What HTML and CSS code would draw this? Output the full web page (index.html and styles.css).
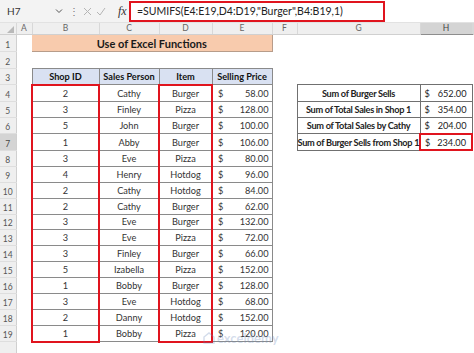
FILE: index.html
```html
<!DOCTYPE html>
<html lang="en">

<head>
    <meta charset="UTF-8">
    <title>Use of Excel Functions</title>
    <link rel="stylesheet" href="styles.css">
</head>

<body>
    <!-- formula bar -->
    <div class="formula-bar">
        <div class="name-box">
            <span>H7</span>
            <svg class="chevron" width="8" height="6" viewBox="0 0 8 6"><path d="M1 1.5 L4 4.5 L7 1.5" fill="none" stroke="#555" stroke-width="1"/></svg>
        </div>
        <span class="dots">&#8942;</span>
        <div class="fx-buttons">
            <svg width="9" height="9" viewBox="0 0 9 9"><path d="M1 1 L8 8 M8 1 L1 8" stroke="#b5b5b5" stroke-width="1"/></svg>
            <svg width="10" height="9" viewBox="0 0 10 9"><path d="M1 5 L4 8 L9 1" fill="none" stroke="#b5b5b5" stroke-width="1"/></svg>
            <span class="fx">fx</span>
        </div>
        <div class="formula-input">
            <span class="formula-text">=SUMIFS(E4:E19,D4:D19,"Burger",B4:B19,1)</span>
        </div>
    </div>

    <!-- worksheet -->
    <div class="sheet-wrap">
        <table class="sheet">
            <colgroup>
                <col style="width:16px"><col style="width:16px"><col style="width:67px"><col style="width:60px">
                <col style="width:53px"><col style="width:60px"><col style="width:25px"><col style="width:123px">
                <col style="width:52px"><col>
            </colgroup>
            <tr class="col-hdr">
                <th class="corner"><span class="tri"></span></th>
                <th>A</th><th>B</th><th>C</th><th>D</th><th>E</th><th>F</th><th>G</th><th class="sel">H</th><th></th>
            </tr>
            <tr class="tall">
                <th class="rh">1</th><td></td>
                <td colspan="4" class="title">Use of Excel Functions</td>
                <td></td><td></td><td></td><td></td>
            </tr>
            <tr class="tall">
                <th class="rh">2</th><td></td><td></td><td></td><td></td><td></td><td></td><td></td><td></td><td></td>
            </tr>
            <tr>
                <th class="rh">3</th><td></td>
                <td class="head">Shop ID</td><td class="head">Sales Person</td><td class="head">Item</td><td class="head">Selling Price</td>
                <td></td><td></td><td></td><td></td>
            </tr>
            <tr>
                <th class="rh">4</th><td></td>
                <td class="d box box-top">2</td><td class="d">Cathy</td><td class="d box box-top">Burger</td>
                <td class="d"><div class="money"><span>$</span><span>58.00</span></div></td>
                <td></td>
                <td class="s lbl">Sum of Burger Sells</td>
                <td class="s"><div class="money"><span>$</span><span>652.00</span></div></td><td></td>
            </tr>
            <tr>
                <th class="rh">5</th><td></td>
                <td class="d box">3</td><td class="d">Finley</td><td class="d box">Pizza</td>
                <td class="d"><div class="money"><span>$</span><span>128.00</span></div></td>
                <td></td>
                <td class="s lbl">Sum of Total Sales in Shop 1</td>
                <td class="s"><div class="money"><span>$</span><span>354.00</span></div></td><td></td>
            </tr>
            <tr>
                <th class="rh">6</th><td></td>
                <td class="d box">5</td><td class="d">John</td><td class="d box">Burger</td>
                <td class="d"><div class="money"><span>$</span><span>100.00</span></div></td>
                <td></td>
                <td class="s lbl">Sum of Total Sales by Cathy</td>
                <td class="s"><div class="money"><span>$</span><span>204.00</span></div></td><td></td>
            </tr>
            <tr>
                <th class="rh sel">7</th><td></td>
                <td class="d box">1</td><td class="d">Abby</td><td class="d box">Burger</td>
                <td class="d"><div class="money"><span>$</span><span>106.00</span></div></td>
                <td></td>
                <td class="s lbl">Sum of Burger Sells from Shop 1</td>
                <td class="s active"><div class="money"><span>$</span><span>234.00</span></div></td><td></td>
            </tr>
            <tr>
                <th class="rh">8</th><td></td>
                <td class="d box">3</td><td class="d">Eve</td><td class="d box">Pizza</td>
                <td class="d"><div class="money"><span>$</span><span>80.00</span></div></td>
                <td></td><td></td><td></td><td></td>
            </tr>
            <tr>
                <th class="rh">9</th><td></td>
                <td class="d box">4</td><td class="d">Henry</td><td class="d box">Hotdog</td>
                <td class="d"><div class="money"><span>$</span><span>96.00</span></div></td>
                <td></td><td></td><td></td><td></td>
            </tr>
            <tr>
                <th class="rh">10</th><td></td>
                <td class="d box">2</td><td class="d">Cathy</td><td class="d box">Hotdog</td>
                <td class="d"><div class="money"><span>$</span><span>84.00</span></div></td>
                <td></td><td></td><td></td><td></td>
            </tr>
            <tr>
                <th class="rh">11</th><td></td>
                <td class="d box">2</td><td class="d">Cathy</td><td class="d box">Burger</td>
                <td class="d"><div class="money"><span>$</span><span>62.00</span></div></td>
                <td></td><td></td><td></td><td></td>
            </tr>
            <tr>
                <th class="rh">12</th><td></td>
                <td class="d box">3</td><td class="d">Eve</td><td class="d box">Burger</td>
                <td class="d"><div class="money"><span>$</span><span>132.00</span></div></td>
                <td></td><td></td><td></td><td></td>
            </tr>
            <tr>
                <th class="rh">13</th><td></td>
                <td class="d box">3</td><td class="d">Eve</td><td class="d box">Pizza</td>
                <td class="d"><div class="money"><span>$</span><span>72.00</span></div></td>
                <td></td><td></td><td></td><td></td>
            </tr>
            <tr>
                <th class="rh">14</th><td></td>
                <td class="d box">3</td><td class="d">Finley</td><td class="d box">Burger</td>
                <td class="d"><div class="money"><span>$</span><span>66.00</span></div></td>
                <td></td><td></td><td></td><td></td>
            </tr>
            <tr>
                <th class="rh">15</th><td></td>
                <td class="d box">5</td><td class="d">Izabella</td><td class="d box">Pizza</td>
                <td class="d"><div class="money"><span>$</span><span>152.00</span></div></td>
                <td></td><td></td><td></td><td></td>
            </tr>
            <tr>
                <th class="rh">16</th><td></td>
                <td class="d box">1</td><td class="d">Bobby</td><td class="d box">Burger</td>
                <td class="d"><div class="money"><span>$</span><span>128.00</span></div></td>
                <td></td><td></td><td></td><td></td>
            </tr>
            <tr>
                <th class="rh">17</th><td></td>
                <td class="d box">3</td><td class="d">Eve</td><td class="d box">Hotdog</td>
                <td class="d"><div class="money"><span>$</span><span>68.00</span></div></td>
                <td></td><td></td><td></td><td></td>
            </tr>
            <tr>
                <th class="rh">18</th><td></td>
                <td class="d box">2</td><td class="d">Danny</td><td class="d box">Hotdog</td>
                <td class="d"><div class="money"><span>$</span><span>152.00</span></div></td>
                <td></td><td></td><td></td><td></td>
            </tr>
            <tr>
                <th class="rh">19</th><td></td>
                <td class="d box box-bottom">1</td><td class="d">Bobby</td><td class="d box box-bottom">Pizza</td>
                <td class="d"><div class="money"><span>$</span><span>120.00</span></div></td>
                <td></td><td></td><td></td><td></td>
            </tr>
            <tr>
                <th class="rh"></th><td></td><td></td><td></td><td></td><td></td><td></td><td></td><td></td><td></td>
            </tr>
        </table>

        <!-- faint site watermark over the table -->
        <div class="watermark">
            <svg width="12" height="12" viewBox="0 0 12 12"><path d="M1 11 V5 L6 1 L11 5 V11 Z" fill="none" stroke="currentColor" stroke-width="1.4"/></svg>
            <span>exceldemy</span>
        </div>
    </div>
</body>

</html>
```

FILE: styles.css
```css
/* page */
body {
    margin: 0;
    background: #fff;
    font-family: Lato, "Liberation Sans", sans-serif;
    color: #222;
    overflow: hidden;
}

/* formula bar along the top */
.formula-bar {
    display: flex;
    align-items: center;
    height: 22px;
    background: #f3f3f3;
    border-bottom: 1px solid #e2e2e2;
}

.name-box {
    display: flex;
    align-items: center;
    justify-content: space-between;
    width: 56px;
    height: 18px;
    padding: 0 6px 0 7px;
    font-size: 10px;
    color: #333;
}

.dots {
    width: 10px;
    text-align: center;
    font-size: 10px;
    color: #777;
}

.fx-buttons {
    display: flex;
    align-items: center;
    gap: 4px;
    width: 46px;
    padding-left: 4px;
}

.fx {
    margin-left: 8px;
    font-family: "Liberation Serif", serif;
    font-style: italic;
    font-size: 12px;
    color: #333;
}

.formula-input {
    flex: 1;
    height: 22px;
    background: #fff;
    display: flex;
    align-items: center;
}

.formula-text {
    display: flex;
    align-items: center;
    height: 17px;
    width: 246px;
    padding-left: 6px;
    border: 2px solid #e0141e;
    font-size: 10.5px;
    color: #222;
}

/* worksheet grid */
.sheet-wrap {
    position: relative;
}

.sheet {
    border-collapse: collapse;
    table-layout: fixed;
    width: 474px;
    font-size: 9.2px;
}

.sheet td,
.sheet th {
    padding: 0;
    height: 14.9px;
    line-height: 11px;
    white-space: nowrap;
    overflow: visible;
}

.sheet tr.tall td,
.sheet tr.tall th {
    height: 16px;
}

/* column header row */
.col-hdr th {
    height: 10px;
    background: #efefef;
    border-right: 1px solid #d8d8d8;
    border-bottom: 1px solid #d0d0d0;
    font-weight: normal;
    font-size: 8.5px;
    color: #666;
    text-align: center;
}

.col-hdr th.sel {
    background: #d4d4d4;
    border-bottom: 1px solid #8d8d8d;
    color: #444;
}

.corner {
    position: relative;
}

.tri {
    position: absolute;
    right: 2px;
    bottom: 1px;
    border-left: 7px solid transparent;
    border-bottom: 7px solid #b9b9b9;
}

/* row numbers on the left */
.rh {
    background: #efefef;
    border-right: 1px solid #d0d0d0;
    border-bottom: 1px solid #dedede;
    font-weight: normal;
    font-size: 8.5px;
    color: #555;
    text-align: center;
    vertical-align: bottom;
}

.rh.sel {
    background: #d4d4d4;
    color: #444;
}

/* title band */
.title {
    background: #f8cbad;
    border-bottom: 1px solid #b79c8a;
    border-right: 1px solid #b79c8a;
    text-align: center;
    font-weight: bold;
    font-size: 11px;
    color: #1a1a1a;
}

/* main data table */
.head {
    background: #d9e1f2;
    border: 1px solid #8a8a8a;
    text-align: center;
    font-weight: bold;
    color: #111;
}

.d {
    border: 1px solid #8a8a8a;
    text-align: center;
    color: #333;
}

.money {
    display: flex;
    justify-content: space-between;
    padding: 0 3px 0 5px;
}

/* red boxes around the criteria columns */
.box {
    border-left: 2px solid #e0141e;
    border-right: 2px solid #e0141e;
}

.box-top {
    border-top: 2px solid #e0141e;
}

.box-bottom {
    border-bottom: 2px solid #e0141e;
}

/* summary table */
.s {
    border: 1px solid #707070;
    color: #222;
}

.s.lbl {
    text-align: center;
    font-weight: bold;
    letter-spacing: -0.3px;
}

.s .money {
    padding: 0 5px 0 4px;
}

.s.active {
    border: 2px solid #e0141e;
}

/* watermark */
.watermark {
    position: absolute;
    left: 203px;
    top: 307px;
    display: flex;
    align-items: center;
    gap: 2px;
    color: rgba(110, 140, 190, 0.3);
    font-size: 13px;
    font-weight: bold;
}
```
